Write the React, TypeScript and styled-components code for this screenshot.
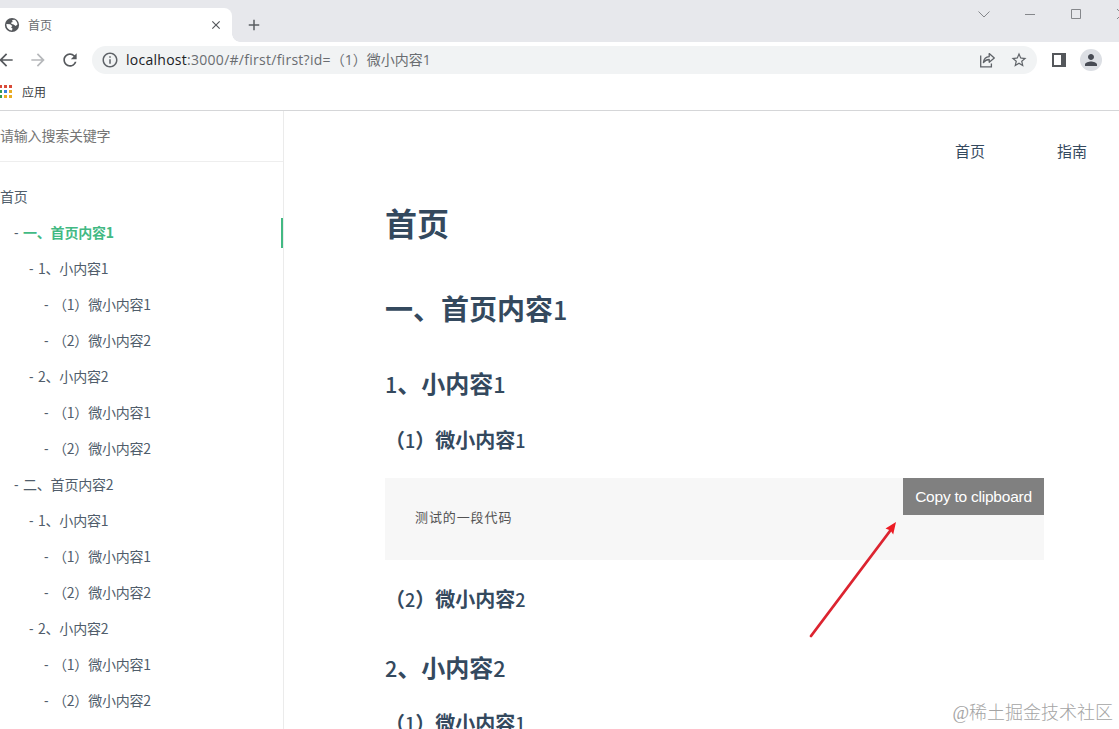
import React from 'react';
import styled, { createGlobalStyle } from 'styled-components';
import { MdArrowBack, MdArrowForward, MdRefresh, MdInfoOutline, MdStarBorder, MdPerson, MdClose, MdAdd } from 'react-icons/md';

const GlobalStyle = createGlobalStyle`
  * { box-sizing: border-box; }
  html, body { margin: 0; padding: 0; overflow: hidden; }
  body { font-family: "Noto Sans CJK SC", sans-serif; background: #fff; }
  svg { display: block; flex: none; }
`;

const Window = styled.div`
  position: relative;
  display: flex;
  flex-direction: column;
  width: 1119px;
  height: 729px;
  overflow: hidden;
`;

const TabStrip = styled.div`
  display: flex;
  height: 42px;
  background: #e7e8ec;
  flex: none;
`;

const Tab = styled.div`
  display: flex;
  align-items: center;
  width: 232px;
  height: 34px;
  margin-top: 8px;
  padding: 0 9px 0 4px;
  background: #fff;
  border-radius: 0 8px 0 0;
`;

const TabTitle = styled.span`
  flex: 1;
  margin-left: 8px;
  font-size: 12px;
  line-height: 18px;
  color: #6a6d71;
`;

const TabFoot = styled.div`
  align-self: flex-end;
  width: 8px;
  height: 8px;
  background: radial-gradient(circle at 100% 0, transparent 7.5px, #fff 8px);
`;

const NewTab = styled.div`
  margin: 16px 0 0 5px;
  color: #5a5d61;
`;

const WindowControls = styled.div`
  display: flex;
  align-items: flex-start;
  gap: 30px;
  margin: 6px -11px 0 auto;
`;

const Toolbar = styled.div`
  display: flex;
  align-items: center;
  height: 36px;
  padding-right: 16px;
  flex: none;
`;

const NavButton = styled.div<{ $muted?: boolean }>`
  display: flex;
  justify-content: center;
  width: 18px;
  margin-right: 14px;
  color: ${p => (p.$muted ? '#b6b8bb' : '#56595d')};
  &:first-child { margin-left: -3px; }
`;

const AddressBar = styled.div`
  display: flex;
  align-items: center;
  width: 945px;
  height: 28px;
  margin-left: -1px;
  padding: 0 9px;
  border-radius: 14px;
  background: #f1f3f4;
  color: #5f6368;
`;

const Url = styled.div`
  flex: 1;
  margin-left: 7px;
  font: 14px/20px "Open Sans", "Noto Sans CJK SC", sans-serif;
  white-space: nowrap;
  color: #6a6d71;
  b { font-weight: 400; color: #202124; }
`;

const UrlHost = styled.span`
  letter-spacing: 0.27px;
`;

const AddressIcons = styled.div`
  display: flex;
  align-items: center;
  gap: 14px;
`;

const PanelButton = styled.div`
  margin-left: 14px;
`;

const Avatar = styled.div`
  display: grid;
  place-items: center;
  width: 22px;
  height: 22px;
  margin-left: 13px;
  border-radius: 50%;
  background: #dcdfe4;
  color: #474b54;
`;

const Bookmarks = styled.div`
  display: flex;
  align-items: center;
  height: 33px;
  padding-bottom: 5px;
  border-bottom: 1px solid #d5d6d8;
  font-size: 12px;
  color: #3c4043;
  flex: none;
`;

const BookmarkLabel = styled.span`
  margin-left: 9px;
  line-height: 18px;
`;

const Page = styled.div`
  display: flex;
  flex: 1;
  min-height: 0;
`;

const Sidebar = styled.aside`
  width: 284px;
  border-right: 1px solid #ebebeb;
  flex: none;
  overflow: hidden;
`;

const Search = styled.div`
  height: 51px;
  margin-bottom: 20px;
  border-bottom: 1px solid #eee;
  font-size: 14px;
  line-height: 48px;
  letter-spacing: -0.2px;
  color: #757575;
`;

const NavItem = styled.div<{ $level: number; $active?: boolean }>`
  display: flex;
  align-items: center;
  height: 30px;
  margin-bottom: 6px;
  padding-bottom: 2px;
  padding-left: ${p => (p.$level ? p.$level * 15 - 1 : 0)}px;
  border-right: 2px solid ${p => (p.$active ? '#42b983' : 'transparent')};
  font-size: 14px;
  line-height: 21px;
  color: #505d6b;
  white-space: pre;
`;

const Dash = styled.span`
  width: 9px;
  font-family: "Open Sans", sans-serif;
`;

const NavLabel = styled.span<{ $active?: boolean }>`
  font-size: 14px;
  letter-spacing: -0.2px;
  color: ${p => (p.$active ? '#42b983' : 'inherit')};
  font-weight: ${p => (p.$active ? 700 : 400)};
`;

const Main = styled.main`
  flex: 1;
  min-width: 0;
`;

const TopNav = styled.nav`
  display: flex;
  justify-content: flex-end;
  gap: 72px;
  height: 62px;
  padding: 28px 32px 0 0;
  font-size: 15px;
  line-height: 24px;
  color: #34495e;
`;

const Article = styled.article`
  width: 659px;
  margin-left: 101px;
  color: #34495e;
`;

const Heading = styled.div<{ $size: number; $height: number }>`
  height: ${p => p.$height}px;
  font-size: ${p => p.$size}px;
  line-height: ${p => p.$height}px;
  font-weight: 700;
  white-space: nowrap;
`;

const Digit = styled.span`
  font-weight: 500;
  font-size: 0.9em;
`;

const CodeBlock = styled.div`
  display: flex;
  justify-content: space-between;
  align-items: flex-start;
  height: 82px;
  margin: 18px 0 10px;
  padding-left: 30px;
  background: #f7f7f7;
`;

const Code = styled.code`
  margin-top: 29px;
  font: 13px/20px "Noto Sans CJK SC", monospace;
  letter-spacing: 0.9px;
  color: #525252;
`;

const CopyButton = styled.button`
  width: 141px;
  height: 37px;
  border: 0;
  padding: 0;
  background: #808080;
  color: #fff;
  font: 15.5px/37px "Liberation Sans", sans-serif;
  letter-spacing: -0.23px;
`;

const Pointer = styled.svg`
  position: absolute;
  left: 800px;
  top: 510px;
`;

const Watermark = styled.div`
  position: absolute;
  right: 6px;
  bottom: 3px;
  font: 18px/26px "Liberation Serif", "Noto Sans CJK SC", serif;
  font-weight: 300;
  color: #a4a4a4;
`;

const GlobeIcon = () => (
  <svg width="16" height="16" viewBox="0 0 16 16">
    <circle cx="8" cy="8" r="7.1" fill="#54575b" />
    <path d="M2.4 7.1 6.2 7.2 8.3 9 7.1 10.4 8.5 11.4 8 13.5 C4.7 13.5 2.3 10.8 2.4 7.1Z M8.1 3 10.6 2.7 C12.3 3.7 13.3 5.2 13.5 7.4 L11.7 8.9 9.6 7.4 7.6 7 7 5.8 8.6 5Z" fill="#fff" />
  </svg>
);

const ShareIcon = () => (
  <svg width="18" height="18" viewBox="0 0 18 18" fill="none" stroke="#5f6368" strokeWidth="1.3">
    <path d="M2.7 4.6V15.8H13.4V12.5" />
    <path d="M5.4 11.6C5.9 7.7 8.2 5.9 11.2 5.7V2.6L16.3 7.1 11.2 11.2V8.5C8.7 8.5 6.9 9.6 5.4 11.6Z" strokeLinejoin="round" />
  </svg>
);

const appColors = ['#d94a38', '#d94a38', '#d94a38', '#369c51', '#3883dc', '#e9ad24', '#369c51', '#e9ad24', '#e9ad24'];
const AppsIcon = () => (
  <svg width="13" height="14" viewBox="0 0 13 14">
    {appColors.map((c, i) => <rect key={i} x={-1 + (i % 3) * 5} y={Math.floor(i / 3) * 5} width="3" height="3" fill={c} />)}
  </svg>
);

const items = [
  { level: 0, label: '首页' },
  { level: 1, label: '一、首页内容1', active: true },
  { level: 2, label: '1、小内容1' },
  { level: 3, label: '（1）微小内容1' },
  { level: 3, label: '（2）微小内容2' },
  { level: 2, label: '2、小内容2' },
  { level: 3, label: '（1）微小内容1' },
  { level: 3, label: '（2）微小内容2' },
  { level: 1, label: '二、首页内容2' },
  { level: 2, label: '1、小内容1' },
  { level: 3, label: '（1）微小内容1' },
  { level: 3, label: '（2）微小内容2' },
  { level: 2, label: '2、小内容2' },
  { level: 3, label: '（1）微小内容1' },
  { level: 3, label: '（2）微小内容2' },
];

export default function App() {
  return (
    <Window>
      <GlobalStyle />
      <TabStrip>
        <Tab>
          <GlobeIcon />
          <TabTitle>首页</TabTitle>
          <MdClose size={14} color="#54575b" />
        </Tab>
        <TabFoot />
        <NewTab><MdAdd size={18} /></NewTab>
        <WindowControls>
          {['M2.5 5.5 8 11 13.5 5.5', 'M3 8.5H13', 'M3.5 3.5H12.5V12.5H3.5Z', 'M3 3 13 13M13 3 3 13'].map(d => (
            <svg key={d} width="16" height="16" fill="none" stroke="#85878b"><path d={d} /></svg>
          ))}
        </WindowControls>
      </TabStrip>
      <Toolbar>
        <NavButton><MdArrowBack size={20} /></NavButton>
        <NavButton $muted><MdArrowForward size={20} /></NavButton>
        <NavButton><MdRefresh size={20} /></NavButton>
        <AddressBar>
          <MdInfoOutline size={18} />
          <Url><UrlHost><b>localhost</b>:3000/#/first/first?id=</UrlHost>（1）微小内容1</Url>
          <AddressIcons>
            <ShareIcon />
            <MdStarBorder size={18} />
          </AddressIcons>
        </AddressBar>
        <PanelButton>
          <svg width="16" height="16"><path fill="#54575b" fillRule="evenodd" d="M1 1H15V15H1ZM3 3V13H10V3Z" /></svg>
        </PanelButton>
        <Avatar><MdPerson size={18} /></Avatar>
      </Toolbar>
      <Bookmarks>
        <AppsIcon />
        <BookmarkLabel>应用</BookmarkLabel>
      </Bookmarks>
      <Page>
        <Sidebar>
          <Search>请输入搜索关键字</Search>
          {items.map((it, i) => (
            <NavItem key={i} $level={it.level} $active={it.active}>
              {it.level > 0 && <Dash>-</Dash>}
              <NavLabel $active={it.active}>{it.label}</NavLabel>
            </NavItem>
          ))}
        </Sidebar>
        <Main>
          <TopNav><span>首页</span><span>指南</span></TopNav>
          <Article>
            <Heading $size={32} $height={98}>首页</Heading>
            <Heading $size={28} $height={74}>一、首页内容<Digit>1</Digit></Heading>
            <Heading $size={24} $height={75}><Digit>1</Digit>、小内容<Digit>1</Digit></Heading>
            <Heading $size={20} $height={40}>（<Digit>1</Digit>）微小内容<Digit>1</Digit></Heading>
            <CodeBlock>
              <Code>测试的一段代码</Code>
              <CopyButton>Copy to clipboard</CopyButton>
            </CodeBlock>
            <Heading $size={20} $height={58}>（<Digit>2</Digit>）微小内容<Digit>2</Digit></Heading>
            <Heading $size={24} $height={78}><Digit>2</Digit>、小内容<Digit>2</Digit></Heading>
            <Heading $size={20} $height={34}>（<Digit>1</Digit>）微小内容<Digit>1</Digit></Heading>
          </Article>
        </Main>
      </Page>
      <Pointer width="110" height="135" viewBox="0 0 110 135">
        <path d="M11 126 90 21" stroke="#dc2430" strokeWidth="2.8" strokeLinecap="round" />
        <path d="M96 12 93.2 24.5 90.5 20.5 85.5 18.5Z" fill="#ed1c24" />
      </Pointer>
      <Watermark>@稀土掘金技术社区</Watermark>
    </Window>
  );
}
